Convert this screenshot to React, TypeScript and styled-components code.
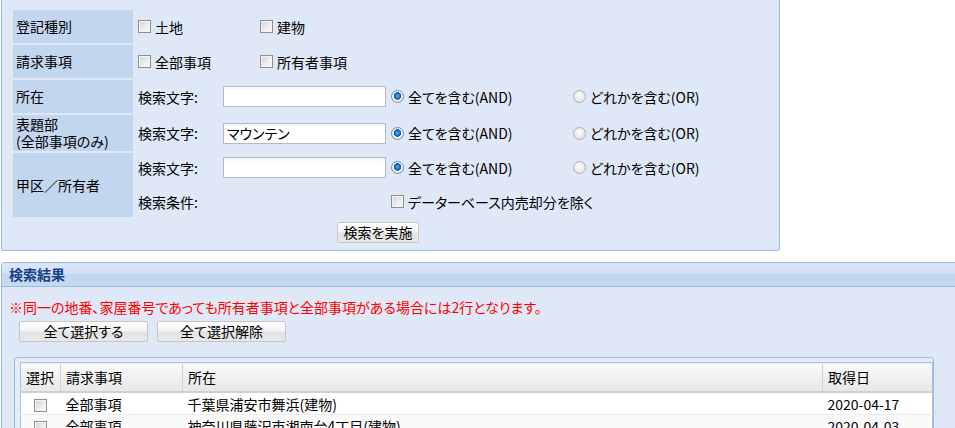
import React from 'react'
import styled, { createGlobalStyle } from 'styled-components'

const GlobalStyle = createGlobalStyle`
  html, body {
    margin: 0;
    padding: 0;
    background: #fff;
    overflow: hidden;
  }
  body {
    font-family: "Noto Sans CJK JP", "Noto Sans", sans-serif;
    font-size: 14px;
    font-feature-settings: "palt";
    color: #000;
  }
`

const SearchPanel = styled.div`
  margin-left: 1px;
  width: 779px;
  background: #dfe8f6;
  border: 1px solid #99bbe8;
  border-top: none;
  border-radius: 0 0 3px 3px;
  padding: 10px 0 7px 11px;
  box-sizing: border-box;
`

const FormGrid = styled.div`
  display: grid;
  grid-template-columns: 120px 1fr;
  grid-template-rows: 33px 33px 33px 36px 64px;
  row-gap: 2px;
`

const LabelCell = styled.div`
  background: #c3d6f0;
  display: flex;
  align-items: center;
  padding-left: 3px;
  line-height: 17px;
`

const FieldCell = styled.div<{ $stack?: boolean }>`
  display: flex;
  flex-direction: column;
  justify-content: ${(p) => (p.$stack ? 'flex-start' : 'center')};
  gap: 5px;
  padding-left: 5px;
`

const FieldLine = styled.div<{ $h?: number }>`
  display: flex;
  align-items: center;
  height: ${(p) => (p.$h ? `${p.$h}px` : 'auto')};
`

const Option = styled.label<{ $w?: number }>`
  display: flex;
  align-items: center;
  gap: 4px;
  width: ${(p) => (p.$w ? `${p.$w}px` : 'auto')};
  white-space: nowrap;
`

const Box = styled.span`
  display: inline-block;
  width: 11px;
  height: 11px;
  border: 1px solid #8f8f8f;
  background: linear-gradient(135deg, #d2d2d2 0%, #ececec 55%, #fdfdfd 100%);
  box-shadow: inset 0 0 0 1px #f4f4f4;
  flex-shrink: 0;
`

const Radio = styled.span<{ $on?: boolean }>`
  display: inline-block;
  width: 11px;
  height: 11px;
  border-radius: 50%;
  border: 1px solid ${(p) => (p.$on ? '#6b8fb5' : '#b0b0b0')};
  background: ${(p) =>
    p.$on
      ? 'radial-gradient(circle at 50% 45%, #5fb3f0 0, #1a6fc0 2.5px, #1b4f8c 3.5px, #f4f4f4 4px, #e2e2e2 100%)'
      : 'radial-gradient(circle at 50% 40%, #ffffff 0, #e8e8e8 60%, #d6d6d6 100%)'};
  flex-shrink: 0;
`

const FieldName = styled.span<{ $w: number }>`
  width: ${(p) => p.$w}px;
  flex-shrink: 0;
`

const TextBox = styled.input`
  width: 163px;
  height: 21px;
  box-sizing: border-box;
  border: 1px solid #b5b8c8;
  background: linear-gradient(#f4f4f4, #ffffff 4px);
  font-family: inherit;
  font-size: 14px;
  font-feature-settings: "palt";
  padding: 0 3px;
  margin-right: 5px;
  outline: none;
`

const ButtonRow = styled.div<{ $pad: number }>`
  display: flex;
  gap: 9px;
  padding-left: ${(p) => p.$pad}px;
`

const Button = styled.button<{ $w: number }>`
  width: ${(p) => p.$w}px;
  height: 21px;
  box-sizing: border-box;
  border: 1px solid #c6c6c6;
  border-radius: 2px;
  background: linear-gradient(#ffffff, #f4f4f4 45%, #e3e3e3 55%, #e8e8e8);
  font-family: inherit;
  font-size: 14px;
  font-feature-settings: "palt";
  color: #000;
  padding: 0;
  line-height: 19px;
`

const SearchButtonWrap = styled.div`
  margin-top: 5px;
  padding-left: 324px;
`

const ResultPanel = styled.div`
  margin: 11px 0 0 1px;
  border: 1px solid #99bbe8;
  border-right: none;
  border-radius: 3px 0 0 0;
  background: #dfe8f6;
`

const ResultHeader = styled.div`
  height: 24px;
  box-sizing: border-box;
  border-bottom: 1px solid #99bbe8;
  background: linear-gradient(#dde8f6, #d2e0f3 45%, #c3d6f0 50%, #c7d9f1);
  color: #15428b;
  font-weight: bold;
  font-size: 14px;
  line-height: 23px;
  padding-left: 7px;
`

const ResultBody = styled.div`
  padding: 12px 0 0 7px;
`

const Notice = styled.div`
  color: #ff0000;
  line-height: 16px;
  white-space: nowrap;
`

const ResultButtons = styled.div`
  margin-top: 6px;
`

const GridFrame = styled.div`
  margin: 15px 0 0 5px;
  width: 920px;
  box-sizing: border-box;
  border: 1px solid #99bbe8;
  border-radius: 3px;
  padding: 4px 5px 0;
  background: #e4ecf7;
`

const Table = styled.table`
  width: 909px;
  border-collapse: collapse;
  border: 1px solid #a9bfe3;
  background: #fff;
  table-layout: fixed;
`

const Th = styled.th<{ $w: number }>`
  width: ${(p) => p.$w}px;
  height: 28px;
  text-align: left;
  font-weight: normal;
  padding: 0 5px;
  background: linear-gradient(#fafafa, #e6e7e9);
  border-right: 1px solid #d0d0d0;
  border-bottom: 2px solid #d0d0d0;
  &:last-child {
    border-right: none;
  }
`

const Tr = styled.tr<{ $alt?: boolean }>`
  background: ${(p) => (p.$alt ? '#fafafa' : '#fff')};
  border-top: 1px solid #ededed;
`

const Td = styled.td<{ $center?: boolean }>`
  height: 21px;
  padding: 0 5px;
  text-align: ${(p) => (p.$center ? 'center' : 'left')};
  white-space: nowrap;
  line-height: 16px;
  & > span {
    vertical-align: middle;
  }
`

const rows = [
  { kind: '全部事項', place: '千葉県浦安市舞浜(建物)', date: '2020-04-17' },
  { kind: '全部事項', place: '神奈川県藤沢市湘南台4丁目(建物)', date: '2020-04-03' },
]

function SearchCondition({ value }: { value: string }) {
  return (
    <FieldLine $h={29}>
      <FieldName $w={85}>検索文字:</FieldName>
      <TextBox defaultValue={value} />
      <Option $w={182}>
        <Radio $on />
        全てを含む(AND)
      </Option>
      <Option>
        <Radio />
        どれかを含む(OR)
      </Option>
    </FieldLine>
  )
}

export default function App() {
  return (
    <>
      <GlobalStyle />
      <SearchPanel>
        <FormGrid>
          <LabelCell>登記種別</LabelCell>
          <FieldCell>
            <FieldLine>
              <Option $w={122}>
                <Box />
                土地
              </Option>
              <Option>
                <Box />
                建物
              </Option>
            </FieldLine>
          </FieldCell>

          <LabelCell>請求事項</LabelCell>
          <FieldCell>
            <FieldLine>
              <Option $w={122}>
                <Box />
                全部事項
              </Option>
              <Option>
                <Box />
                所有者事項
              </Option>
            </FieldLine>
          </FieldCell>

          <LabelCell>所在</LabelCell>
          <FieldCell>
            <SearchCondition value="" />
          </FieldCell>

          <LabelCell>
            表題部
            <br />
            (全部事項のみ)
          </LabelCell>
          <FieldCell>
            <SearchCondition value="マウンテン" />
          </FieldCell>

          <LabelCell>甲区／所有者</LabelCell>
          <FieldCell $stack>
            <SearchCondition value="" />
            <FieldLine $h={29}>
              <FieldName $w={253}>検索条件:</FieldName>
              <Option>
                <Box />
                データーベース内売却分を除く
              </Option>
            </FieldLine>
          </FieldCell>
        </FormGrid>
        <SearchButtonWrap>
          <Button $w={82}>検索を実施</Button>
        </SearchButtonWrap>
      </SearchPanel>

      <ResultPanel>
        <ResultHeader>検索結果</ResultHeader>
        <ResultBody>
          <Notice>※同一の地番、家屋番号であっても所有者事項と全部事項がある場合には2行となります。</Notice>
          <ResultButtons>
            <ButtonRow $pad={10}>
              <Button $w={129}>全て選択する</Button>
              <Button $w={129}>全て選択解除</Button>
            </ButtonRow>
          </ResultButtons>
          <GridFrame>
            <Table>
              <thead>
                <tr>
                  <Th $w={29}>選択</Th>
                  <Th $w={111}>請求事項</Th>
                  <Th $w={629}>所在</Th>
                  <Th $w={99}>取得日</Th>
                </tr>
              </thead>
              <tbody>
                {rows.map((r, i) => (
                  <Tr key={i} $alt={i % 2 === 1}>
                    <Td $center>
                      <Box />
                    </Td>
                    <Td>{r.kind}</Td>
                    <Td>{r.place}</Td>
                    <Td>{r.date}</Td>
                  </Tr>
                ))}
              </tbody>
            </Table>
          </GridFrame>
        </ResultBody>
      </ResultPanel>
    </>
  )
}
